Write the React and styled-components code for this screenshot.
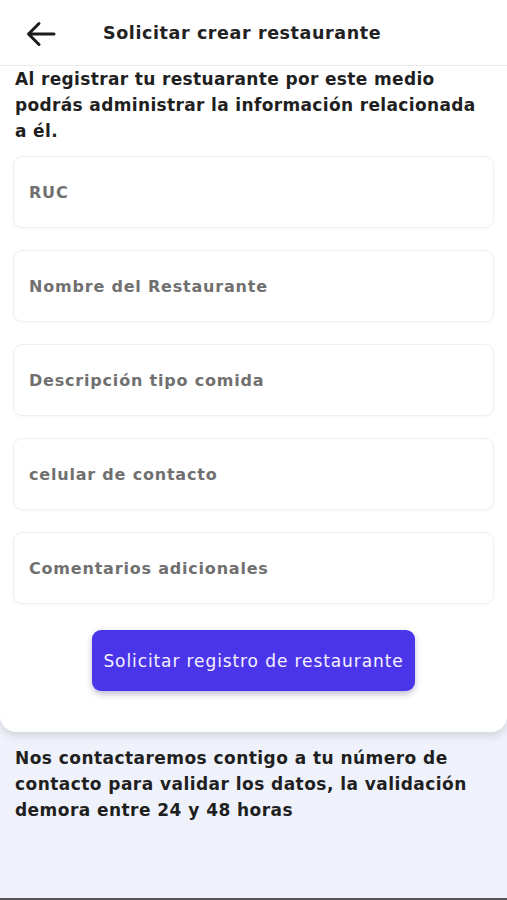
import React from "react";
import styled, { createGlobalStyle } from "styled-components";

const GlobalStyle = createGlobalStyle`
  html, body {
    margin: 0;
    padding: 0;
    background: #eff2fa;
    font-family: "DejaVu Sans", "Noto Sans", sans-serif;
  }
  * { box-sizing: border-box; }
`;

const fields = [
  "RUC",
  "Nombre del Restaurante",
  "Descripción tipo comida",
  "celular de contacto",
  "Comentarios adicionales",
];

const App = () => {
  return (
    <>
      <GlobalStyle />
      <Page>
        <Card>
          <Header>
            <BackButton aria-label="Volver">
              <svg width="30" height="26" viewBox="0 0 30 26" fill="none">
                <path
                  d="M28 13H3M13 2.5L2.5 13L13 23.5"
                  stroke="#1c1c1c"
                  strokeWidth="3"
                  strokeLinecap="round"
                  strokeLinejoin="round"
                />
              </svg>
            </BackButton>
            <Title>Solicitar crear restaurante</Title>
          </Header>
          <Body>
            <Intro>
              Al registrar tu restuarante por este medio podrás administrar la
              información relacionada a él.
            </Intro>
            <Form>
              {fields.map((label) => (
                <Field key={label} placeholder={label} />
              ))}
              <SubmitButton type="button">
                Solicitar registro de restaurante
              </SubmitButton>
            </Form>
          </Body>
        </Card>
        <Notice>
          Nos contactaremos contigo a tu número de contacto para validar los
          datos, la validación demora entre 24 y 48 horas
        </Notice>
        <BottomBar />
      </Page>
    </>
  );
};

const Page = styled.div`
  height: 900px;
  display: flex;
  flex-direction: column;
  background: #eff2fa;
  overflow: hidden;
`;

const Card = styled.div`
  background: #ffffff;
  border-radius: 0 0 16px 16px;
  box-shadow: 0 4px 8px rgba(0, 0, 0, 0.12);
  padding-bottom: 41px;
`;

const Header = styled.div`
  height: 66px;
  display: flex;
  align-items: center;
  border-bottom: 1.5px solid #ececec;
  padding-left: 26px;
  gap: 47px;
`;

const BackButton = styled.button`
  border: none;
  background: none;
  padding: 0;
  display: flex;
  align-items: center;
  margin-top: 2px;
`;

const Title = styled.h1`
  margin: 0;
  font-size: 17.5px;
  font-weight: 700;
  letter-spacing: 0.6px;
  color: #222;
`;

const Body = styled.div`
  padding: 0 13px;
`;

const Intro = styled.p`
  margin: 0;
  padding: 0 14px 0 2px;
  font-size: 17px;
  font-weight: 700;
  line-height: 26px;
  letter-spacing: 0.35px;
  color: #1f1f1f;
`;

const Form = styled.form`
  margin-top: 12px;
  display: flex;
  flex-direction: column;
  gap: 22px;
`;

const Field = styled.input`
  height: 72px;
  width: 100%;
  border: 1px solid #f0f0f0;
  border-radius: 9px;
  padding: 0 15px;
  font-family: inherit;
  font-size: 16px;
  font-weight: 700;
  letter-spacing: 0.8px;
  outline: none;
  background: #fff;
  box-shadow: 0 1px 3px rgba(0, 0, 0, 0.04);

  &::placeholder {
    color: #707070;
  }
`;

const SubmitButton = styled.button`
  align-self: center;
  margin-top: 4px;
  width: 323px;
  height: 61px;
  border: none;
  border-radius: 9px;
  background: #4b35ea;
  color: #f4f2ff;
  font-family: inherit;
  font-size: 17px;
  font-weight: 400;
  letter-spacing: 0.9px;
  box-shadow: 0 3px 6px rgba(40, 30, 120, 0.3);
`;

const Notice = styled.p`
  margin: 13px 0 0;
  padding: 0 15px;
  font-size: 17px;
  font-weight: 700;
  line-height: 26px;
  letter-spacing: 0.45px;
  color: #1f1f1f;
  flex: 1;
`;

const BottomBar = styled.div`
  height: 2px;
  background: #555;
`;

export default App;
